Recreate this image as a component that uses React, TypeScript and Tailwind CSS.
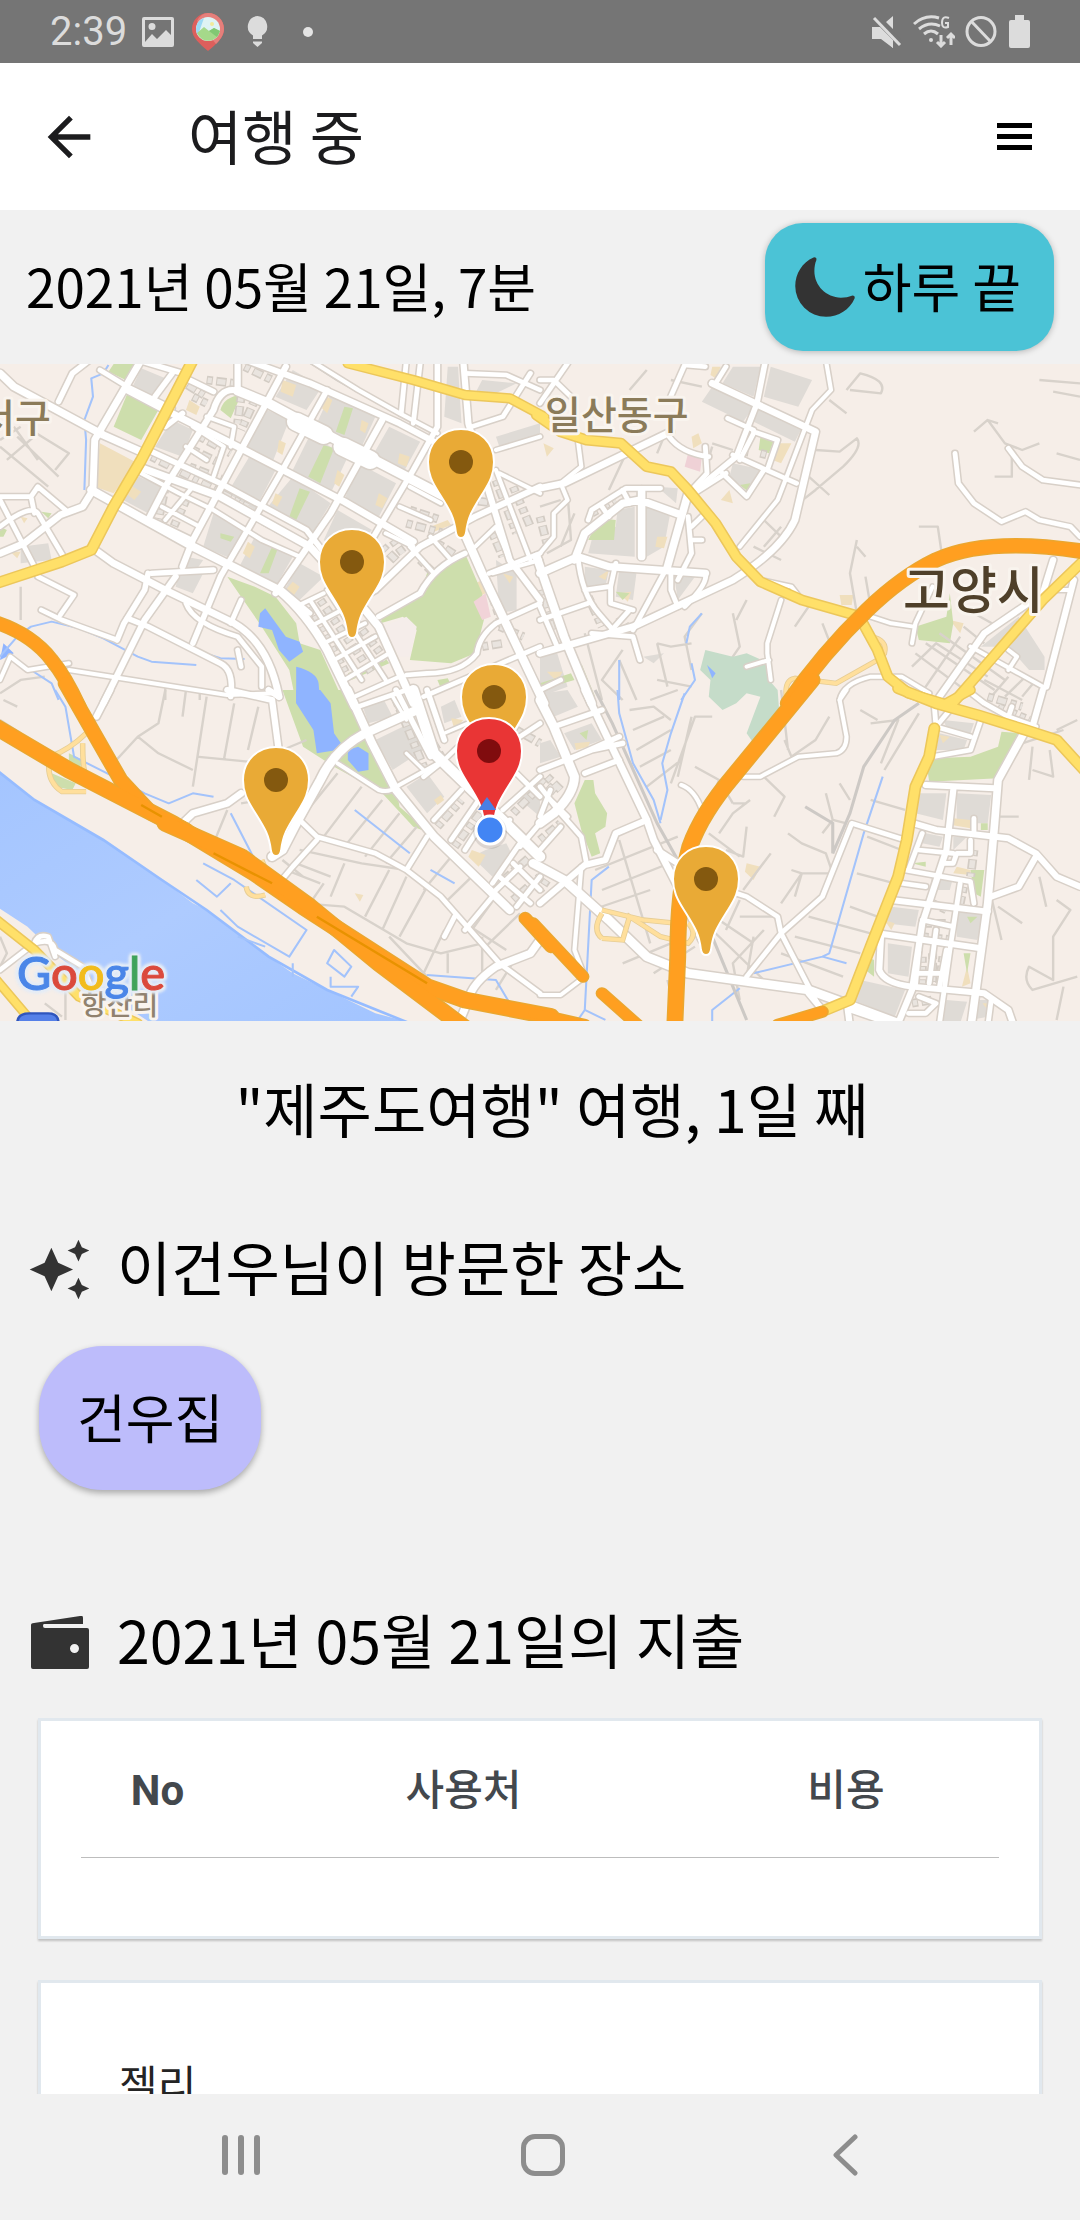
import type { ReactNode } from 'react';
import { MdArrowBack, MdAutoAwesome } from 'react-icons/md';
import { IoMoon } from 'react-icons/io5';

type Tile = 'a' | 'b' | 'c' | 'd';
type Road = [width: number, d: string];

// The map is drawn in four tiles that share one local scale.
const TILE_TRANSFORM: Record<Tile, string> = {
  a: 'translate(0 -4) scale(.3444 .3333)',
  b: 'translate(540 -4) scale(.3444 .3333)',
  c: 'translate(0 326) scale(.3444 .3333)',
  d: 'translate(540 326) scale(.3444 .3333)',
};
const TILES: Tile[] = ['a', 'b', 'c', 'd'];

const LANES: Record<Tile, string> = {
  a: 'M0 260L140 380M50 230L170 350M90 210L200 280L160 330M20 300L110 220M0 240L60 200M60 680V780M130 950L60 960L0 1000M480 980V1020M580 990V1020M110 300L40 200',
  b: 'M890 90L930 40Q1010 60 990 100L900 90M840 120L890 160M800 270L870 275L920 235Q940 260 880 320L800 390L750 430M770 340L840 405M1260 215L1300 180L1350 250L1400 270L1450 250M1300 180L1330 190M1370 280L1370 350L1320 350M1450 60L1568 70M1490 95L1568 110M1500 280L1568 300M920 540L900 640L920 760M920 560L945 590M1100 500L1155 500L1165 570M945 650L960 740M0 440L60 420M80 400L90 540L20 580M100 460L60 560M250 280L200 390M360 230L340 280M470 760L420 830L440 930M560 760L580 860L520 950M600 720L570 780M230 900L280 1020M340 850L380 860L440 850M340 850L370 980M130 820L180 1020M240 870L180 960L240 1020M440 980L340 960M700 500L650 560M650 480L700 530M620 560L700 600M780 740L740 800M820 790L850 870M1080 920L1150 850L1300 950M1090 880L1260 1010M1120 850L1320 990M1160 820L1350 960M1100 1010L1220 830M1150 1010L1270 870M1210 1010L1300 900M1260 760L1330 800M1230 800L1290 850M1310 1010L1360 950M1350 1010L1410 950M1400 1010L1440 960M1290 960L1400 1020M310 30L260 90M470 80L380 60M500 260L480 330M500 250L560 270',
  c: 'M480 0L460 100L400 140L320 230M400 140L460 190L560 240M540 0L530 80M600 20L560 290M680 40L650 210M750 50L720 180M570 200L720 215M820 180L890 150M0 90L60 130M10 30L50 50M660 360L620 460L560 420M700 340L760 330M980 250L870 390M1050 290L940 440M1110 330L1000 470M1160 370L1060 500M1210 410L1120 520M830 540L930 580M860 520L960 560M870 480L1050 520L1180 540M1130 540L1060 680M1180 560L1110 720M1240 590L1160 740M880 640L1000 650L1180 760L1280 790L1400 760M1310 500L1230 600M1370 560L1290 640M1440 620L1370 720M1510 670L1410 770M1290 720L1230 850M1300 790V850M1400 740V850M1130 740L1240 860M820 510L880 560M940 580L900 640M1000 520L960 620M1350 700L1470 780M1500 800L1440 900M0 740L20 790L0 830M130 940L180 980M190 900V990',
  d: 'M260 60L330 50L380 90M270 120L360 80M280 180L380 120M290 230L380 180M310 290L410 210M320 30L400 0M440 80L400 260M500 80H450L380 280M450 230L520 270L560 340M560 340H600M520 270L500 320M640 250L710 320L680 380M710 150L730 200L800 150L840 80M700 0L720 180M610 330L560 370L520 430M720 430L760 460L830 490L850 550M600 410L590 500L540 480M490 430L580 500M670 490L590 600M730 540L760 550L850 550M760 550L700 640M760 550L740 620M830 310L850 390L890 400M870 280L900 330M850 390L820 430M960 330L1060 360M950 440L1050 480M920 550L1030 580M900 650L980 680M780 680L960 730M740 740L930 790M700 790L880 860M230 450L320 760M160 540L400 440M180 600L400 510M150 660L320 600M240 820L380 760M330 850L450 770M370 870L400 990M500 720L680 900M520 690L620 760M580 630L540 720M620 740L600 860M650 720L560 820L580 930M690 680L580 680M1430 170L1420 270M1480 180L1490 260L1430 240M1400 160L1520 120M1320 380L1390 380M1310 620L1340 750M1330 650L1400 700M1500 630L1540 660L1490 740V870L1420 830Q1400 870 1430 900L1560 860M1520 890L1500 990M1450 560L1470 650M960 100L1040 90L990 220M1100 70L1000 240M930 60L980 90M1560 90L1500 120',
};

const ROADS: Record<Tile, Road[]> = {
  a: [
    [22, 'M0 40L40 80L300 225L420 280'],
    [24, 'M265 390L560 560L810 690Q890 760 950 870L1030 1040'],
    [28, 'M690 92L780 130L1050 280L1310 420'],
    [54, 'M860 185L940 225M995 260L1075 300'],
    [18, 'M715 0L900 70L1160 190L1260 245'],
    [12, 'M900 0L1040 90L1160 160L1270 220'],
    [20, 'M370 90L480 150L700 265L1000 425L1200 545'],
    [14, 'M290 30L370 80L500 145'],
    [22, 'M400 320L640 410L900 560L980 650L1100 800L1200 1030'],
    [16, 'M430 270L640 370L890 510L950 590'],
    [12, 'M410 340L520 400L620 450L760 540L870 590'],
    [20, 'M410 0L300 195L275 240L270 390L240 440L175 465L70 550L0 580'],
    [16, 'M260 0L210 40L170 125'],
    [16, 'M500 40L450 110M530 40L400 0'],
    [18, 'M690 0L690 92Q640 80 620 150L480 380L430 480'],
    [16, 'M550 60L620 95M530 160L480 200'],
    [18, 'M830 20L700 270L560 540L530 620'],
    [16, 'M950 90L820 330L640 650L560 850'],
    [18, 'M1110 180L960 460L800 700'],
    [16, 'M1270 0V200L1200 330L1085 530'],
    [18, 'M1345 0L1360 190L1400 330L1480 600L1568 720'],
    [14, 'M1180 0L1165 160M1220 10L1200 190'],
    [14, 'M1350 40L1470 45L1568 90M1540 40L1460 170L1370 200'],
    [24, 'M1340 500L1400 640L1520 900L1580 1030'],
    [18, 'M1568 380L1380 470L1220 560L1090 690L1000 740'],
    [16, 'M1350 580Q1260 620 1220 700L1100 770'],
    [14, 'M1568 580L1420 640M1568 730L1440 790Q1390 830 1385 880Q1340 940 1240 940L1180 945M1568 860L1230 1010'],
    [12, 'M1190 380L1280 430M1160 440L1250 480M1190 560L1260 640M1250 530L1310 600M1120 520L1200 560'],
    [12, 'M1440 270L1568 230M1450 340L1568 400M1440 330L1540 600M1380 560L1440 500L1480 600M1430 640L1568 600'],
    [12, 'M900 720L1050 960M950 690L1120 960M860 740L940 700M900 800L1010 740M940 850L1060 790M970 900L1090 830M1000 960L1130 880M1030 1010L1160 950'],
    [20, 'M270 565L330 610L480 690L680 790Q780 850 810 1010'],
    [14, 'M540 730Q560 790 690 830L760 920L760 980M690 870L700 920'],
    [16, 'M430 640L420 690L360 790L340 840M440 640L620 630'],
    [18, 'M510 650L420 780L300 1030'],
    [16, 'M370 775L430 800L640 910Q680 930 670 1010'],
    [14, 'M110 650L215 705L175 765M120 750L180 780L340 840'],
    [14, 'M0 410L90 410L110 380L190 450M0 420L110 640M0 500Q90 430 110 460L190 600M90 410L100 460'],
    [12, 'M0 960L30 890L80 930L200 910M200 930L660 1005L810 1000'],
    [14, 'M700 720L670 790M820 690L900 760'],
    [12, 'M600 170L680 200L670 260M560 200L650 260L620 350M540 260L600 300M470 440L580 500M440 480L560 540M560 380L480 480'],
  ],
  b: [
    [20, 'M0 385L70 370L380 215'],
    [14, 'M480 20L420 15L375 120M375 230Q410 280 490 290M480 260L485 340L440 390'],
    [20, 'M500 70L800 215L740 480Q700 570 560 660L270 800L0 880'],
    [16, 'M655 0L630 130L570 290L440 400'],
    [14, 'M560 285L745 370M620 220L580 300M620 215L690 240L660 330M545 175L620 210'],
    [12, 'M830 0L845 90L790 150L720 340L690 420L580 560'],
    [14, 'M530 340L600 410L650 330M540 20L510 70M440 405L540 340'],
    [12, 'M110 240L120 320L60 370L80 420L40 460L40 530L0 580'],
    [22, 'M295 390V590M100 600L130 520L240 430L290 420L410 465M430 400L370 620M0 640L110 590L200 620L480 640'],
    [14, 'M140 480L150 450L250 385H350M180 440L200 470M240 390L260 430'],
    [14, 'M110 590Q120 700 170 760L220 820M480 640Q490 670 420 740M380 640L380 690L400 740M370 620L270 810M220 610L205 680L205 730L270 750M200 820L260 750M130 690L200 680'],
    [24, 'M-10 590L70 830L150 1030'],
    [14, 'M0 780L140 730M0 740L50 860M150 820L270 830L290 900M0 990L60 960'],
    [14, 'M430 470L440 580L400 660M440 500L480 460M440 540H470'],
    [12, 'M640 660L730 680L760 720M700 720L660 850V880L670 960M600 920L665 900'],
    [14, 'M1205 280L1215 370L1260 430L1340 485L1410 455L1450 480L1540 500L1568 530'],
    [14, 'M1360 265L1400 320L1460 360L1568 375'],
    [12, 'M960 770L1020 790L1085 800M1140 680L1090 790L1080 850'],
    [18, 'M1490 600L1460 700L1290 820L1160 1010M1550 660L1470 980'],
    [12, 'M870 1020Q880 970 960 950H1050L1130 1000M1250 860L1460 980M1360 870L1385 890L1360 930M1460 690H1540'],
    [14, 'M0 60H40L90 110M80 10L0 130'],
  ],
  c: [
    [18, 'M320 0L280 80M660 0L790 30L808 170M810 20L780 0'],
    [26, 'M1210 60L1060 130Q970 180 930 270L860 400L820 480L790 500'],
    [20, 'M700 310L660 340L560 370L530 400'],
    [12, 'M980 220L1100 300Q1130 310 1150 290L1290 210L1330 170'],
    [24, 'M1010 0L1080 160L1150 300L1260 440L1480 660'],
    [30, 'M1200 0L1260 190L1400 330L1568 500'],
    [16, 'M1150 0L1250 200M1240 0L1290 150'],
    [14, 'M870 390L920 440L1090 490L1180 540L1280 620L1450 820L1568 910M920 450L850 530L810 580M1240 440L1180 540M1430 620L1350 720M1320 680L1290 740'],
    [22, 'M1568 750L1540 790L1440 830Q1370 880 1360 930L1340 980'],
    [14, 'M1040 50L1180 0M1290 210L1230 260M1340 300L1260 390M1390 330L1310 450M1430 350L1350 480M1480 390L1420 450M1510 460L1430 580M1568 560L1500 650M1450 560L1540 640M1490 520L1568 600M1440 600L1510 530'],
    [14, 'M1460 360L1568 260M1500 250L1568 320M1480 160L1568 100M1510 470L1568 400'],
    [14, 'M0 840L100 760Q110 730 140 740L160 800M100 760Q160 740 160 790M160 780L240 830L260 880'],
    [10, 'M1290 130L1380 90M1140 20L1180 90M1180 190L1230 240'],
  ],
  d: [
    [26, 'M0 30L40 110L100 260Q100 310 40 370L0 400'],
    [26, 'M-20 520L70 570L200 690L310 800L430 850L780 900L860 930L1040 1000'],
    [20, 'M130 0L190 130L310 390L330 450L400 590L470 750'],
    [18, 'M310 390L220 430L190 510L130 525L0 640M340 480L400 520'],
    [16, 'M0 240L150 180L240 160M40 110L180 60M80 210L230 140M130 250L230 210'],
    [14, 'M0 290L60 370L120 440L135 520M0 380L30 300M0 480L60 410M30 330L80 380'],
    [12, 'M120 530L100 780L130 860L60 915H0'],
    [12, 'M410 285Q450 300 470 360M590 260H640L750 200L860 190Q890 180 890 140L870 30L890 0'],
    [14, 'M570 610L600 620L690 680L700 730L810 950M700 730L820 620L905 400L1060 450M700 730L600 860'],
    [14, 'M1145 50L1150 110L1250 140M1190 60L1150 110M1280 90L1250 180L1140 200M1240 0L1290 40L1360 80L1440 110M1370 50L1360 80'],
    [22, 'M1410 120L1330 270L1320 400L1300 640L1250 1020'],
    [18, 'M1120 285L1320 295M1200 300L1180 480L1110 700L1080 900L1040 1000'],
    [18, 'M1085 400L1150 420L1360 445L1440 490L1500 560L1568 590M1440 500L1390 590L1310 620'],
    [14, 'M1060 540L1250 575L1260 640M1050 580L1120 590M1110 430L1070 540M1100 480L1200 490M1260 385V430M1250 450L1250 490H1210L1200 520H1170'],
    [18, 'M1020 630L1300 665M980 730L1280 775M990 740L985 840Q1000 880 1080 890L1290 910L1360 960L1380 1020'],
    [14, 'M1220 580L1190 780L1160 1000M1110 690L1200 710M1150 720L1130 880M1100 780L1090 890M1180 780L1160 890M1090 850H1170M1310 930L1300 1010M1100 920L1150 940L1120 970H1070'],
    [18, 'M780 910L820 960M890 930L900 1010'],
    [18, 'M1460 0L1430 110'],
    [14, 'M900 960L1040 1010'],
  ],
};

const YELLOW: Record<Tile, Road[]> = {
  a: [
    [26, 'M560 0L480 160L410 300L330 440L265 570L180 605L-10 670'],
    [22, 'M1010 10L1200 60L1350 105L1480 115L1580 170'],
  ],
  b: [
    [24, 'M-10 165L60 215L135 240L235 250L310 320L380 335L430 390L510 490L570 590L640 665L760 720L930 770'],
    [24, 'M935 785L980 870L1010 950L1070 1000L1200 1040'],
    [24, 'M1580 600L1460 720L1350 850L1190 1040'],
  ],
  c: [
    [22, 'M-10 690L100 780L230 920L400 1000'],
    [20, 'M-10 870L80 980'],
  ],
  d: [
    [26, 'M1040 -5L1150 40L1270 75L1410 120L1500 150L1580 240'],
    [26, 'M1145 115L1130 200L1090 290L1065 450L1040 560L960 770L900 930L830 960'],
    [22, 'M1170 45L1250 0'],
  ],
};

const RAMPS: Record<Tile, string> = {
  a: '',
  b: 'M980 900L860 970L740 955Q710 960 715 1010M960 830Q1010 840 1000 880L985 890M740 990L800 960',
  c: 'M250 130Q200 180 145 200Q130 270 180 305L250 305M240 160Q240 240 250 260M760 510L780 560M715 590Q720 630 770 615',
  d: 'M180 660L300 690L400 700M180 745Q150 720 180 670M180 745L240 750L260 680L350 740L430 760Q460 730 430 700',
};

const ORANGE: Record<Tile, Road[]> = {
  a: [[34, 'M-20 785Q90 820 150 900Q190 950 230 1040']],
  b: [[38, 'M1580 575Q1300 530 1150 600Q1050 650 950 750Q820 880 720 1030']],
  c: [
    [36, 'M190 -20L350 270L440 370L540 420'],
    [42, 'M-30 100L200 240L500 400L740 550L880 650L1000 730L1240 890L1350 930L1600 980'],
    [42, 'M480 400L700 500L900 650L1100 820L1370 1030'],
    [30, 'M1525 685L1600 770'],
  ],
  d: [
    [40, 'M790 -30L560 260Q470 370 435 470Q400 600 400 800L390 1040'],
    [28, 'M-20 700L125 860M180 910L300 1020M-20 970L130 1005M690 1005L820 965'],
  ],
};

const GREEN: Record<Tile, string> = {
  a: 'M370 100L460 150L410 240L330 200ZM330 12H390L365 60L315 35ZM640 150Q650 110 700 105L670 175ZM1000 140L1025 145L1000 225L975 215ZM940 255L970 265L930 370L895 350ZM870 385L900 395L860 480L840 470ZM790 560L805 570L780 640L755 640ZM660 650L740 680L800 710L860 790L870 850L930 870L1000 1030H860L840 930L760 800L700 710ZM1350 580L1400 700L1405 780L1380 880L1310 910L1190 900L1210 810L1170 770L1105 790L1110 770L1220 700L1240 640ZM1010 940L1120 895L1130 910L1020 960ZM0 500L20 510L10 530L0 530ZM1270 960L1300 955L1310 975L1280 985ZM640 520L680 530L670 545L640 535ZM120 455L150 460L140 475Z',
  b: 'M640 230L680 240L665 280L635 270ZM150 520L175 475L220 480L215 540L140 540ZM1090 800L1180 770L1190 700L1200 790L1190 850L1100 840ZM580 375L610 370L605 395ZM220 695L260 700L240 720ZM0 970L90 940L100 960L0 990ZM120 910L160 1010H140Z',
  c: 'M820 0H1000L1060 150L1150 290L1160 350L1250 430L1200 410L1110 310L970 230L880 170ZM200 190L240 210L230 240L200 220ZM150 250L220 280L210 300L160 290Z',
  d: 'M1340 125L1400 130L1330 265L1130 275L1125 240L1140 205L1250 200L1330 170ZM130 270L155 270L160 310L195 370L190 410L160 430L175 490L150 500L120 420L100 340ZM115 130L140 120L135 150ZM1250 540L1290 540L1280 620L1260 610ZM1230 790L1250 790L1240 850ZM950 800L970 810L970 860L945 840ZM1080 520L1120 515L1120 530ZM1240 680L1270 680L1250 700ZM1280 400H1300V420H1280Z',
};

const BLOCKS: Record<Tile, string> = {
  a: 'M410 25L480 55L445 110L385 80ZM380 340L470 380L430 460L340 410ZM500 180L560 210L530 290L450 260ZM765 145L840 180L790 310L715 270ZM850 30L935 80L890 150L800 110ZM960 100L1090 170L1050 260L920 190ZM1130 200L1220 245L1170 340L1080 290ZM900 225L1010 290L960 400L850 330ZM730 280L805 320L740 450L660 400ZM850 350L960 430L900 530L770 450ZM1040 310L1150 370L1100 470L1000 420ZM980 450L1080 510L1000 600L940 540ZM620 460L720 500L680 600L590 560ZM740 530L850 590L800 680L690 630ZM870 610L940 650L860 730L820 700ZM1300 20L1330 20L1340 190L1290 170ZM520 640L590 640L560 700L510 680ZM60 560L140 550L150 600L60 610ZM540 590L590 600L570 630H530ZM1440 600L1500 640L1500 750L1450 760ZM1400 60L1500 70L1440 100H1380ZM1440 230L1568 190V220L1450 260Z',
  b: 'M500 80L620 140L590 185L470 125ZM630 145L760 205L740 245L610 180ZM560 20L640 20L620 110L530 70ZM670 20L790 60L750 140L650 110ZM150 540L220 500L225 450L275 440V590L140 580ZM310 440L380 450L360 560L310 590ZM230 630L280 640L270 720L220 710ZM560 310L650 330L600 390L550 350ZM130 620L200 630L190 680L130 690ZM1280 860L1390 770L1465 890V930L1420 930L1360 860ZM390 650L450 650L400 720ZM0 880L50 880L80 980L0 1010ZM300 890L360 880L330 910ZM340 380L400 385L395 430Z',
  c: 'M1050 40L1110 20L1140 80L1070 100ZM1090 150L1190 100L1230 180L1140 240ZM1180 290L1240 250L1290 320L1240 370ZM1280 50L1320 30L1340 80L1290 100ZM1410 480L1470 460L1490 500L1430 560L1370 500ZM1500 320L1550 290L1568 330V380ZM1200 120L1240 110L1250 150Z',
  d: 'M0 160L30 150L60 200L0 220ZM10 10L80 0L110 50L40 80ZM70 130L150 100L180 150L100 180ZM1100 310L1180 310L1170 390L1090 370ZM1210 310L1310 315L1300 400L1210 400ZM1120 430L1170 440L1160 470L1110 460ZM1200 440L1240 440L1200 480ZM1020 650L1100 660L1090 710L1000 700ZM1010 760L1080 770L1070 860L1010 850ZM930 870L1060 900L1030 980L910 930ZM1180 930L1240 935L1220 1000H1170ZM1170 90L1260 100L1250 130L1180 110ZM1160 130L1240 150L1230 180L1150 180ZM1140 550L1200 560L1190 600L1130 600ZM1210 650L1290 670L1270 750L1210 740ZM1270 930H1300V980L1250 990Z',
};

// Rows of small buildings, drawn as dashed strokes between the streets.
const BUILDINGS: Record<Tile, string> = {
  a: 'M600 60L680 70M710 20L790 60M560 110L600 130M560 270L640 310M580 230L670 280M550 320L650 360M480 380L460 480M540 420L500 510M700 110L690 190M740 120L700 210M1190 450L1280 480M1180 490L1290 520M1110 560L1160 610M1140 540L1170 580M1220 600L1260 640M1270 550L1330 590M900 740L1010 950M930 720L1080 940M970 700L1120 900M1430 520L1460 590M1420 680L1460 800M1450 800L1520 830M1400 860L1460 850M1440 360L1500 520M1490 380L1540 500M1360 420L1440 430M520 60L600 110M440 290L720 440M740 470L900 560',
  b: 'M150 460L220 420M600 230L590 290M640 280L680 290M0 690L40 820M0 470L20 550M140 710L180 800M230 770L250 800',
  c: 'M1270 410L1340 330M1320 470L1400 360M1440 590L1540 500M1490 630L1568 560M1490 370L1568 290M1140 10L1180 90M1240 130L1310 250M1150 30L1230 230M1500 120L1568 160',
  d: 'M0 270L50 310M20 260L60 300M0 450L60 400M20 570L0 600M1110 740L1200 750M1110 800V880M1140 790V880M1170 800L1160 880M1230 590L1220 640M1140 640L1180 660M1260 480L1250 560M1080 940L1140 930M1120 700L1180 700M1300 20L1400 50M1330 50L1420 90',
};

const TAN: Record<Tile, string> = {
  a: 'M550 120L580 140L570 165L540 150ZM820 60L860 75L850 110L815 95ZM950 110L965 120L950 160L935 145ZM810 240L830 250L820 285L805 275ZM980 330L1000 345L985 380L970 370ZM1050 180L1070 190L1060 220L1045 210ZM1160 280L1190 290L1180 320L1155 310ZM1100 400L1125 415L1110 445L1090 435ZM370 370L410 395L390 420L365 400ZM800 400L820 410L805 440L790 430ZM720 545L740 560L725 595L705 580ZM850 665L870 680L850 710L825 695ZM1250 500L1300 480L1310 495L1260 515ZM1360 680L1400 660L1410 700L1370 720ZM30 575L60 575L50 595ZM60 470L80 475L70 490ZM1460 640L1490 650L1480 670ZM290 250L400 310L330 400L275 380Z',
  b: 'M500 20L525 20L510 55L495 45ZM690 250L730 250L700 310L675 300ZM440 230L460 220L470 250L445 265ZM340 530L370 530L360 565L335 560ZM525 420L550 390L560 430ZM230 700L265 695L255 725ZM870 705L910 705L905 735H875ZM1190 780L1230 790L1220 820ZM10 250L40 265L20 290ZM20 935L65 935L50 965ZM170 650L200 630L190 660Z',
  c: 'M1260 330L1280 315L1290 330L1270 345ZM1370 480L1410 495L1390 530L1360 500ZM1310 85L1345 90L1320 120ZM1030 610L1055 615L1045 635Z',
  d: 'M600 520L640 530L620 570L595 545ZM1200 385L1250 390V415L1195 405ZM100 160L145 155L140 170L105 180ZM1210 530L1250 540L1250 555L1200 550ZM1160 135L1190 140L1170 160ZM1240 830L1250 880L1225 890ZM1000 690L1030 700L1020 720ZM1285 940H1300V960Z',
};

const STREAMS: Record<Tile, string> = {
  a: 'M315 15L300 40L265 55L270 110L245 180L250 240L245 390M0 890L50 830L90 800L150 785L230 805L300 835L400 890L440 905L570 915M610 885L640 895L710 897M90 930L150 970L170 1020M0 665L20 655',
  b: 'M470 760L435 800L425 850M440 910L450 960L410 1020M230 900V1020',
  c: 'M160 0L190 50L215 200L330 260L420 310L490 340L560 310L620 320M670 370L740 510M1030 360L1190 490M590 520L680 570L890 720L840 800L690 710L640 660M570 570L630 620L670 580M970 780L1020 830L1000 860L950 820ZM960 860V890L1040 890L1020 920M1240 855L1440 870L1480 940M690 740L770 770M1250 540L1320 580M850 820V860',
  d: 'M225 0L230 70L270 220L330 330L350 400M420 10L380 130L355 220L370 300L350 390M995 260L940 430L840 790L820 800L620 850M820 800L890 820M200 530L150 570L130 960L110 990M130 960L190 990M580 895L500 960V1020',
};

const WATER: Record<Tile, string> = {
  a: 'M770 745L755 760L750 800L790 810L810 870L840 905L880 875L870 845L830 830ZM860 920Q920 935 925 970L930 1030H860ZM10 850L40 880L0 900Z',
  b: 'M485 915L510 940L500 955Z',
  c: 'M860 0H930L960 40L970 130L990 160L980 180L920 190L910 120L860 40ZM1010 180L1040 170L1070 190V240L1040 245L1010 210Z',
  d: '',
};

const RAIL: Record<Tile, string> = {
  a: 'M890 0L980 60L1160 165L1270 220',
  b: '',
  c: '',
  d: 'M160 0L210 100L340 400L400 510M1100 40L1030 90L940 230L900 370L850 490V400L770 350M500 740L600 990',
};

const eachTile = (draw: (tile: Tile) => ReactNode) =>
  TILES.map((tile) => (
    <g key={tile} transform={TILE_TRANSFORM[tile]}>
      {draw(tile)}
    </g>
  ));

function RoadLayer({ roads, fill, casing }: { roads: Record<Tile, Road[]>; fill: string; casing: string }) {
  return (
    <g fill="none" strokeLinejoin="round" strokeLinecap="round">
      <g stroke={casing}>
        {eachTile((tile) => roads[tile].map(([w, d]) => <path key={d} d={d} strokeWidth={w + 9} />))}
      </g>
      <g stroke={fill}>
        {eachTile((tile) => roads[tile].map(([w, d]) => <path key={d} d={d} strokeWidth={w} />))}
      </g>
    </g>
  );
}

function Marker({ x, y, red = false }: { x: number; y: number; red?: boolean }) {
  return (
    <g transform={`translate(${x} ${y})`}>
      <path
        d="M0-33C-19-33-33-19-33 0C-33 12-29 20-22 31C-12 47-7 54-5 71Q-4 76 0 76Q4 76 5 71C7 54 12 47 22 31C29 20 33 12 33 0C33-19 19-33 0-33Z"
        fill={red ? '#e93535' : '#e9aa36'}
        stroke="#fff"
        strokeWidth="2"
      />
      <circle r="12" fill={red ? '#800c0e' : '#84590f'} />
    </g>
  );
}

function TripMap() {
  return (
    <svg viewBox="0 0 1080 657" className="block h-auto w-full" role="img" aria-label="여행 지도">
      <defs>
        <linearGradient id="river" x1="0" y1="0" x2="1" y2="1">
          <stop offset="0" stopColor="#a4c5ff" />
          <stop offset=".5" stopColor="#aecbff" />
          <stop offset="1" stopColor="#a2c4ff" />
        </linearGradient>
      </defs>
      <rect width="1080" height="657" fill="#f6eee8" />
      {eachTile((t) => (
        <g>
          <path d={BLOCKS[t]} fill="#dfdbd6" />
          <path d={TAN[t]} fill="#f0dfbd" />
          <path d={GREEN[t]} fill="#cddeac" />
          <path d={LANES[t]} fill="none" stroke="#d8d2cb" strokeWidth="7" strokeLinejoin="round" />
          <path d={BUILDINGS[t]} fill="none" stroke="#d3ccc4" strokeWidth="26" strokeDasharray="18 10 30 10" />
          <path d={BUILDINGS[t]} fill="none" stroke="#e9e4df" strokeWidth="16" strokeDasharray="12 16 24 16" strokeDashoffset="-3" />
        </g>
      ))}
      <g transform={TILE_TRANSFORM.a} fill="#f1d3d8">
        <path d="M1375 725L1410 700L1425 770L1400 780Z" />
        <path d="M1110 800L1180 770L1210 800L1190 890L1160 890Z" fill="#f5edea" />
      </g>
      <g transform={TILE_TRANSFORM.b}>
        <path d="M430 280L470 290L465 335L420 320Z" fill="#efd1d6" />
        <path d="M480 870L560 890L600 880L665 910V960L690 990L695 1060L670 1090L620 1150L600 1120L640 1010L600 1000L570 1030L530 1050L490 1010L495 960L465 930Z" fill="#c5dcc9" />
      </g>
      <g transform={TILE_TRANSFORM.c}>
        <path
          d="M-10 240L100 330L300 450L470 570L560 640L600 660L700 740L780 800L850 850L950 900L1090 970L1200 1000H440L380 960L260 870L170 800L80 710L-10 650Z"
          fill="url(#river)"
        />
        <path d="M-10 240L100 330L300 450L470 570L600 660L780 800L950 900L1190 1000" fill="none" stroke="#96bcff" strokeWidth="8" />
      </g>
      {eachTile((t) => (
        <g>
          <path d={WATER[t]} fill="#8fb4ff" />
          <path d={STREAMS[t]} fill="none" stroke="#a3c3fb" strokeWidth="6" strokeLinejoin="round" />
          <path d={RAIL[t]} fill="none" stroke="#cdc9c5" strokeWidth="9" />
        </g>
      ))}
      <RoadLayer roads={ROADS} fill="#ffffff" casing="#d8d0c8" />
      {eachTile((t) => (
        <g fill="none">
          <path d={RAMPS[t]} stroke="#e6cd95" strokeWidth="16" />
          <path d={RAMPS[t]} stroke="#ffdf9c" strokeWidth="11" />
        </g>
      ))}
      <RoadLayer roads={YELLOW} fill="#ffe069" casing="#ecc75b" />
      <RoadLayer roads={ORANGE} fill="#ff9f20" casing="#eba62f" />
      <g transform={TILE_TRANSFORM.c} fill="none" stroke="#e89200" strokeWidth="7">
        <path d="M410 345L470 380M620 490L790 580M920 680L1240 880" />
        <path d="M50 1000Q50 970 85 970H140Q170 970 170 1000" fill="#5580e8" stroke="#2f55bd" />
      </g>

      <g
        className="font-['Noto_Sans_CJK_KR',sans-serif] font-medium"
        stroke="#f9f4ee"
        strokeWidth="6"
        strokeLinejoin="round"
        paintOrder="stroke"
        fill="#8b7b59"
        fontSize="39"
      >
        <text x="-21" y="68">서구</text>
        <text x="545" y="65">일산동구</text>
        <text x="903" y="245" fontSize="51" fill="#4f402a">고양시</text>
        <text x="81" y="651" fontSize="28" fill="#90826f">항산리</text>
      </g>
      <text
        x="17"
        y="626"
        className="font-[Lato,sans-serif] font-medium [filter:drop-shadow(2px_0_1px_#e4ecf6)_drop-shadow(-2px_0_1px_#e4ecf6)_drop-shadow(0_2px_1px_#e4ecf6)_drop-shadow(0_-2px_1px_#e4ecf6)]"
        fontSize="47"
        strokeWidth="1"
      >
        <tspan fill="#4a86e8" stroke="#4a86e8">G</tspan>
        <tspan fill="#db4a3c" stroke="#db4a3c">o</tspan>
        <tspan fill="#f2bc1c" stroke="#f2bc1c">o</tspan>
        <tspan fill="#4a86e8" stroke="#4a86e8">g</tspan>
        <tspan fill="#3fa35b" stroke="#3fa35b">l</tspan>
        <tspan fill="#db4a3c" stroke="#db4a3c">e</tspan>
      </text>

      <Marker x={461} y={98} />
      <Marker x={352} y={198} />
      <Marker x={494} y={333} />
      <Marker x={276} y={416} />
      <Marker x={706} y={515} />
      <Marker x={489} y={387} red />
      <path d="M487 433L496 446L478 446Z" fill="#4a7fe4" />
      <circle cx="490" cy="468" r="17" fill="#000" opacity=".1" />
      <circle cx="490" cy="466" r="14" fill="#4285f4" stroke="#fff" strokeWidth="3" />
    </svg>
  );
}

function StatusBar() {
  return (
    <div className="flex h-[63px] shrink-0 items-center justify-between bg-[#757575] px-[50px] text-[#dcdcdc]">
      <div className="flex items-center">
        <span className="w-[92px] font-[Roboto,sans-serif] text-[40px] leading-none">2:39</span>
        <svg viewBox="0 0 32 30" className="h-[30px] w-8" fill="currentColor" aria-hidden="true">
          <path fillRule="evenodd" d="M2 0H30Q32 0 32 2V28Q32 30 30 30H2Q0 30 0 28V2Q0 0 2 0ZM3 3V25L10 17L15 22L24 13L29 18V3ZM10 6A3.5 3.5 0 1 1 10 13A3.5 3.5 0 1 1 10 6Z" />
        </svg>
        <svg viewBox="0 0 32 38" className="ml-[18px] h-[38px] w-8" aria-hidden="true">
          <path d="M16 0C7 0 0 7 0 16C0 25 8 31 16 38C24 31 32 25 32 16C32 7 25 0 16 0Z" fill="#dd5f5c" />
          <path d="M16 0C25 0 32 7 32 16C32 22 28 27 24 31L5 8Q9 0 16 0Z" fill="#e57f7b" />
          <circle cx="16" cy="16" r="12" fill="#def3f4" />
          <path d="M4 16A12 12 0 0 1 12 5L6 22Q4 20 4 16Z" fill="#9bd9f5" />
          <path d="M5 20L12 14L17 18L22 15L28 18A12 12 0 0 1 5 20Z" fill="#a5d98a" />
          <path d="M17 18L22 15L28 18L25 24Z" fill="#82c873" />
          <circle cx="20" cy="11" r="2" fill="#f1ea9a" />
        </svg>
        <svg viewBox="0 0 21 31" className="ml-[23px] h-[31px] w-[21px]" fill="currentColor" aria-hidden="true">
          <path d="M10.500 0A10.500 10.500 0 0 1 15 19.500V23H6V19.500A10.500 10.500 0 0 1 10.500 0ZM6 25.500H15V27L10.500 31L6 27Z" />
        </svg>
        <span className="ml-[35px] size-[10px] rounded-full bg-[#e4e4e4]" />
      </div>
      <div className="flex items-center">
        <svg viewBox="0 0 30 32" className="h-8 w-[30px]" fill="currentColor" aria-hidden="true">
          <path d="M21 0V13L14 6ZM0 11H6L21 26V32L9 23H0Z" />
          <path d="M2 11H8L21 24V32L11 23H2Q0 23 0 21V13Q0 11 2 11Z" />
          <path d="M4 0L30 27" stroke="#757575" strokeWidth="3" />
          <path d="M2 2L28 29" stroke="currentColor" strokeWidth="3" />
        </svg>
        <svg viewBox="0 0 42 33" className="ml-[11px] h-[33px] w-[42px]" fill="none" stroke="currentColor" strokeWidth="3" aria-hidden="true">
          <path d="M1 9Q12-1 26 3M6 14Q16 6 27 11M11 19Q18 13 25 19" />
          <circle cx="18" cy="25" r="2" fill="currentColor" stroke="none" />
          <path d="M36 3Q29 0 29 8Q29 14 35 12V8H32" strokeWidth="2" />
          <path d="M28 20V30M24 27L28 31L32 27M38 30V20M34 23L38 19L42 23" strokeWidth="3" />
        </svg>
        <svg viewBox="0 0 32 33" className="ml-[10px] h-[33px] w-8" fill="none" stroke="currentColor" strokeWidth="3" aria-hidden="true">
          <circle cx="16" cy="16.500" r="14" />
          <path d="M6 6L26 27" />
        </svg>
        <svg viewBox="0 0 21 33" className="ml-3 h-[33px] w-[21px]" fill="currentColor" aria-hidden="true">
          <path d="M6 0H15V5H19Q21 5 21 7V31Q21 33 19 33H2Q0 33 0 31V7Q0 5 2 5H6Z" />
        </svg>
      </div>
    </div>
  );
}

function SectionTitle({ icon, children }: { icon: ReactNode; children: ReactNode }) {
  return (
    <div className="flex h-20 items-center gap-[25px] pl-[27px] whitespace-nowrap">
      <span className="flex w-[65px] justify-center text-[#333]">{icon}</span>
      <h2 className="pb-2 text-[59px] leading-none">{children}</h2>
    </div>
  );
}

function WalletIcon() {
  return (
    <svg viewBox="0 0 58 53" className="h-[53px] w-[58px]" fill="currentColor" aria-hidden="true">
      <path
        fillRule="evenodd"
        d="M0 9Q0 7 3 7L49 0Q52-1 52 2V8H13Q12 8 12 10Q12 12 14 12H56Q58 12 58 14V51Q58 53 56 53H2Q0 53 0 51ZM43.500 28A4.500 4.500 0 1 0 43.500 37A4.500 4.500 0 1 0 43.500 28Z"
      />
    </svg>
  );
}

const CARD = 'border-3 border-[#e1e8ee] bg-white shadow-[0_2px_2px_rgba(0,0,0,0.2)]';

export default function App() {
  return (
    <div className="flex h-screen flex-col overflow-hidden bg-[#f1f1f1] font-['Noto_Sans_CJK_KR',sans-serif] text-black">
      <StatusBar />
      <header className="flex h-[147px] shrink-0 items-center bg-white px-[37px]">
        <button type="button" aria-label="뒤로" className="text-[#1c1c1e]">
          <MdArrowBack size={64} />
        </button>
        <h1 className="ml-[87px] pb-1 text-[59px] leading-none text-[#1c1c1e]">여행 중</h1>
        <button type="button" aria-label="메뉴" className="mr-[11px] ml-auto flex flex-col gap-[6px]">
          <span className="h-[5px] w-[35px] bg-black" />
          <span className="h-[5px] w-[35px] bg-black" />
          <span className="h-[5px] w-[35px] bg-black" />
        </button>
      </header>

      <main className="min-h-0 flex-1 overflow-y-auto [scrollbar-width:none]">
        <div className="flex h-[154px] items-center justify-between pr-[26px] pl-[26px]">
          <p className="pb-1 text-[53px] leading-none">2021년 05월 21일, 7분</p>
          <button
            type="button"
            className="flex h-32 items-center gap-1 rounded-[38px] bg-[#4bc3d6] pr-[33px] pl-[26px] text-[53px] leading-none shadow-[0_1px_6px_rgba(0,0,0,0.25)]"
          >
            <IoMoon size={68} className="text-[#333]" />
            <span className="pb-1">하루 끝</span>
          </button>
        </div>

        <TripMap />

        <h2 className="flex h-[180px] items-center justify-center pb-2 pl-6 text-[59px] leading-none">"제주도여행" 여행, 1일 째</h2>

        <section className="mt-7">
          <SectionTitle icon={<MdAutoAwesome size={65} />}>이건우님이 방문한 장소</SectionTitle>
          <button
            type="button"
            className="mt-[37px] ml-[39px] h-36 rounded-[64px] bg-[#bdbcfb] px-[38px] pb-1 text-[53px] leading-none shadow-[0_3px_6px_rgba(0,0,0,0.3)]"
          >
            건우집
          </button>
        </section>

        <section className="mt-28">
          <SectionTitle icon={<WalletIcon />}>2021년 05월 21일의 지출</SectionTitle>
          <div className="mx-[38px] mt-9 flex flex-col gap-[41px]">
            <div className={`${CARD} h-[221px] px-10`}>
              <table className="w-full table-fixed border-b border-[#bdbdbd] text-[42px] leading-none text-[#43484d]">
                <thead>
                  <tr className="h-[136px]">
                    <th scope="col" className="w-1/6 pt-1 font-[Roboto,sans-serif] font-bold">No</th>
                    <th scope="col" className="w-1/2 pb-1 font-medium">사용처</th>
                    <th scope="col" className="w-1/3 pb-1 font-medium">비용</th>
                  </tr>
                </thead>
              </table>
            </div>
            <div className={`${CARD} px-[78px] py-[75px] text-[42px] leading-[50px] text-[#242424]`}>
              <p>젤리</p>
            </div>
          </div>
        </section>
      </main>

      <nav className="grid h-[126px] shrink-0 grid-cols-[1fr_1fr_1fr] items-center bg-[#f1f1f1] pr-[84px] pb-1 pl-[90px] text-[#8d8d8d]">
        <button type="button" aria-label="최근 앱" className="flex justify-center gap-[10px]">
          <span className="h-10 w-[6px] rounded-full bg-current" />
          <span className="h-10 w-[6px] rounded-full bg-current" />
          <span className="h-10 w-[6px] rounded-full bg-current" />
        </button>
        <button type="button" aria-label="홈" className="flex justify-center">
          <span className="h-[42px] w-[44px] rounded-[14px] border-5 border-current" />
        </button>
        <button type="button" aria-label="이전" className="flex justify-center">
          <svg viewBox="0 0 26 42" className="h-[42px] w-[26px]" fill="none" stroke="currentColor" strokeWidth="5" strokeLinecap="round" strokeLinejoin="round">
            <path d="M23 3L4 21L23 39" />
          </svg>
        </button>
      </nav>
    </div>
  );
}
